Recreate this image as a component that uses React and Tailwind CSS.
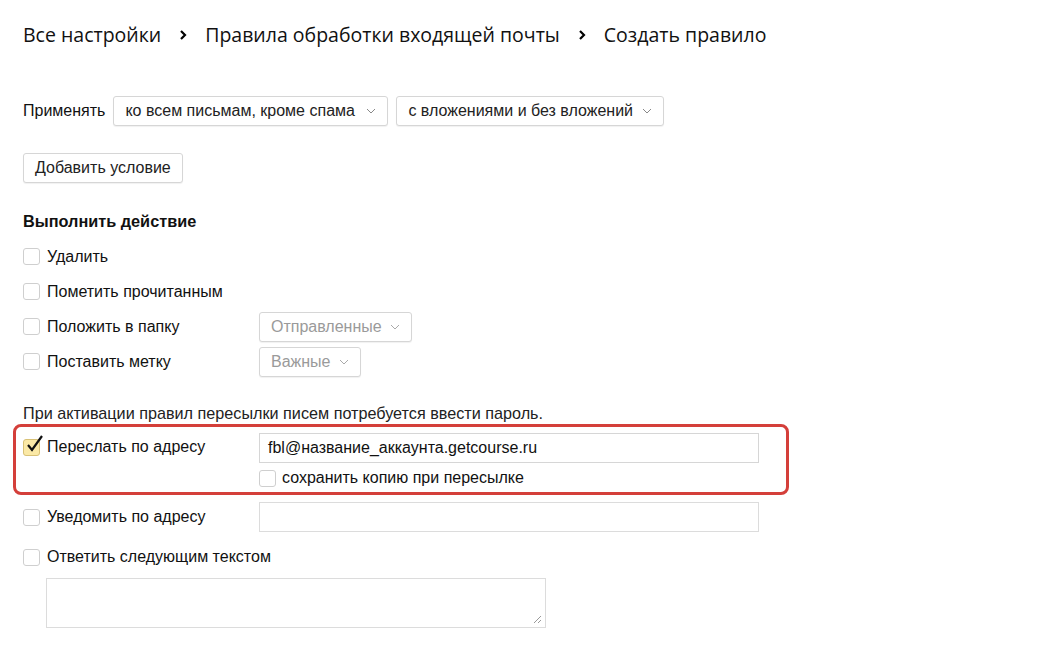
import React from 'react';

const Chevron = ({ className = '' }) => (
  <svg width="10" height="6" viewBox="0 0 10 6" className={className}>
    <path d="M1 1l4 4 4-4" fill="none" stroke="currentColor" strokeWidth="1" />
  </svg>
);

const Crumb = () => (
  <svg width="10" height="12" viewBox="0 0 10 12" className="mx-[17px]">
    <path d="M3 2l4 4-4 4" fill="none" stroke="#000" strokeWidth="2.2" />
  </svg>
);

const Select = ({ label, width, muted }) => (
  <div
    className={`flex items-center justify-between h-[30px] px-[11px] border border-[#d6d6d6] rounded-[3px] bg-white shadow-[0_1px_1px_rgba(0,0,0,0.06)] ${width} ${muted ? 'text-[#9a9a9a]' : 'text-[#222]'}`}
  >
    <span>{label}</span>
    <Chevron className={muted ? 'text-[#aaa]' : 'text-[#888]'} />
  </div>
);

const Box = ({ checked }) => (
  <span
    className={`inline-flex items-center justify-center w-[17px] h-[17px] rounded-[3px] border shrink-0 relative ${checked ? 'bg-[#fbe9a6] border-[#d8c176]' : 'bg-white border-[#cfcfcf]'}`}
  >
    {checked && (
      <svg width="20" height="20" viewBox="0 0 20 20" className="absolute left-[1px] top-[-6px]">
        <path d="M3 11l4 5L17 2" fill="none" stroke="#111" strokeWidth="2.2" />
      </svg>
    )}
  </span>
);

const Row = ({ label, checked, children }) => (
  <div className="flex items-center h-[35px]">
    <label className="flex items-center gap-[7px] w-[236px] whitespace-nowrap">
      <Box checked={checked} />
      <span>{label}</span>
    </label>
    {children}
  </div>
);

export default function App() {
  return (
    <div className="min-h-[658px] bg-white text-[#111] font-['Liberation_Sans',Arial,sans-serif] text-[16px] leading-none pl-[23px] pt-[23px]">
      <div className="flex items-center font-['Open_Sans',sans-serif] text-[19.5px] text-[#111] h-[24px]">
        <span>Все настройки</span>
        <Crumb />
        <span>Правила обработки входящей почты</span>
        <Crumb />
        <span>Создать правило</span>
      </div>

      <div className="flex items-center mt-[49px]">
        <span className="mr-[8px]">Применять</span>
        <Select label="ко всем письмам, кроме спама" width="w-[275px]" />
        <div className="w-[8px]" />
        <Select label="с вложениями и без вложений" width="w-[268px]" />
      </div>

      <button className="mt-[27px] h-[30px] px-[11px] border border-[#d6d6d6] rounded-[3px] bg-white shadow-[0_1px_1px_rgba(0,0,0,0.06)] text-[#222]">
        Добавить условие
      </button>

      <div className="mt-[30px] font-bold text-[16.3px] text-[#111]">Выполнить действие</div>

      <div className="mt-[10px]">
        <Row label="Удалить" />
        <Row label="Пометить прочитанным" />
        <Row label="Положить в папку">
          <Select label="Отправленные" width="w-[153px]" muted />
        </Row>
        <Row label="Поставить метку">
          <Select label="Важные" width="w-[102px]" muted />
        </Row>
      </div>

      <div className="mt-[26px] text-[16.2px] text-[#222]">При активации правил пересылки писем потребуется ввести пароль.</div>

      <div className="-ml-[10px] mt-[2px] w-[776px] h-[71px] border-[3px] border-[#d43f3a] rounded-[8px] pl-[7px] pt-[6px]">
        <div className="flex">
          <label className="flex items-start gap-[7px] w-[236px] pt-[6px]">
            <Box checked />
            <span>Переслать по адресу</span>
          </label>
          <div>
            <div className="w-[500px] h-[30px] border border-[#d6d6d6] flex items-center px-[8px] text-[#111]">
              fbl@название_аккаунта.getcourse.ru
            </div>
            <label className="flex items-center gap-[6px] mt-[7px]">
              <Box />
              <span>сохранить копию при пересылке</span>
            </label>
          </div>
        </div>
      </div>

      <div className="mt-[5px]">
        <Row label="Уведомить по адресу">
          <div className="w-[500px] h-[30px] border border-[#dcdcdc]" />
        </Row>
      </div>
      <div className="mt-[5px]">
        <Row label="Ответить следующим текстом" />
      </div>
      <div className="ml-[23px] mt-[3px] w-[500px] h-[50px] border border-[#dcdcdc] relative">
        <svg width="10" height="10" viewBox="0 0 10 10" className="absolute right-[3px] bottom-[3px]">
          <path d="M9 2L2 9M9 6L6 9" stroke="#999" strokeWidth="1" />
        </svg>
      </div>
    </div>
  );
}
